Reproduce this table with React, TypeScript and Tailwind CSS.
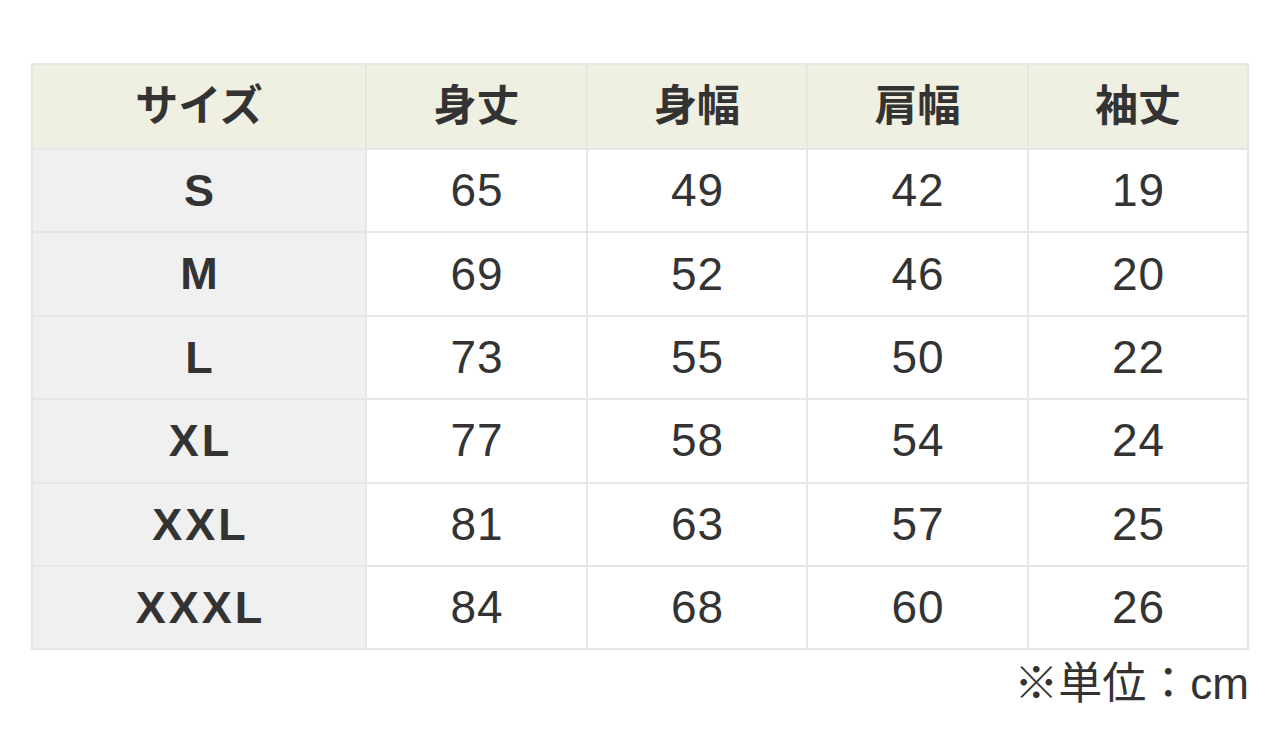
const HEAD = ['サイズ', '身丈', '身幅', '肩幅', '袖丈'];

const ROWS: [string, number, number, number, number][] = [
  ['S', 65, 49, 42, 19],
  ['M', 69, 52, 46, 20],
  ['L', 73, 55, 50, 22],
  ['XL', 77, 58, 54, 24],
  ['XXL', 81, 63, 57, 25],
  ['XXXL', 84, 68, 60, 26],
];

const WIDTHS = ['w-[334px]', 'w-[221px]', 'w-[220px]', 'w-[221px]', 'w-[220px]'];

export default function App() {
  return (
    <div
      className="w-[1280px] h-[739px] bg-white text-[#333] pt-[63px] px-[31px]"
      style={{ fontFamily: '"Liberation Sans", "Noto Sans CJK JP", sans-serif' }}
    >
      <table className="w-[1218px] border-collapse table-fixed">
        <thead>
          <tr className="h-[85px] bg-[#efefe2]">
            {HEAD.map((h, i) => (
              <th
                key={h}
                className={`${WIDTHS[i]} border-2 border-[#e6e6e6] text-center text-[43px] font-bold`}
              >
                {h}
              </th>
            ))}
          </tr>
        </thead>
        <tbody>
          {ROWS.map((r) => (
            <tr key={r[0]} className="h-[83.4px]">
              <td className="border-2 border-[#e6e6e6] bg-[#f0f0f0] text-center text-[45px] font-bold tracking-[3px] pl-[3px]">
                {r[0]}
              </td>
              {r.slice(1).map((v, j) => (
                <td
                  key={j}
                  className="border-2 border-[#e6e6e6] bg-white text-center text-[46px] tracking-[1px] pl-[1px]"
                >
                  {v}
                </td>
              ))}
            </tr>
          ))}
        </tbody>
      </table>
      <div className="w-[1218px] text-right text-[44px] leading-none mt-[12px]">※単位：cm</div>
    </div>
  );
}
